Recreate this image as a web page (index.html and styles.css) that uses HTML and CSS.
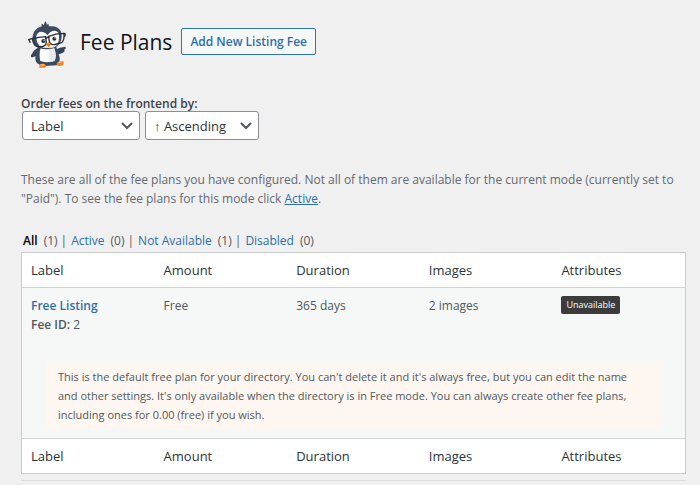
FILE: index.html
```html
<!DOCTYPE html>
<html lang="en">
<head>
<meta charset="utf-8">
<title>Fee Plans</title>
<meta name="viewport" content="width=device-width, initial-scale=1">
<link rel="stylesheet" href="styles.css">
</head>
<body>
<main class="page">
  <header class="page-header">
    <svg class="logo" viewBox="24 30 117 141" aria-hidden="true">
      <path d="M51 112 Q39 119 33 133 Q31 140 37 139 Q47 137 55 130Z" fill="#35445a"/>
      <path d="M106 116 Q119 108 136 107 Q140 112 132 117 Q137 119 131 124 Q122 131 108 130Z" fill="#35445a"/>
      <path d="M53 107 Q42 135 48 152 Q56 164 76 165 L110 163 Q123 156 118 136 L108 105Z" fill="#3b4a60"/>
      <path d="M62 110 Q56 129 61 150 Q77 157 104 150 Q111 131 102 110Z" fill="#fff"/>
      <path d="M87 111 L102 110 Q111 131 104 150 L88 154Z" fill="#e3e9ed"/>
      <path d="M66 46 Q63 41 65 38 L72 42 Q72 34 78 31 Q79 37 81 41 L86 38 Q84 44 89 46 Q112 43 122 60 Q129 77 120 96 Q108 114 84 115 Q53 116 42 99 Q33 82 42 63 Q51 49 66 46Z" fill="#3b4a60"/>
      <path d="M49 76 Q53 59 69 63 Q78 65 83 73 Q90 58 106 59 Q120 63 117 81 Q116 101 103 108 Q84 115 62 107 Q49 99 49 76Z" fill="#fff"/>
      <path d="M84 112 Q107 109 117 83 Q115 100 103 108 Q94 112 84 112Z" fill="#dce3e9"/>
      <path d="M55 93 Q59 105 72 108 L84 108 L82 111 Q68 111 60 105Z" fill="#d4dce3"/>
      <circle cx="70" cy="90" r="6" fill="#202a36"/>
      <circle cx="103" cy="83" r="6" fill="#202a36"/>
      <circle cx="72" cy="88" r="2" fill="#fff"/>
      <circle cx="105" cy="81" r="2" fill="#fff"/>
      <g fill="none" stroke="#242b34" stroke-width="4" stroke-linejoin="round" stroke-linecap="round">
        <path d="M37 83 Q57 78 77 77 L79 96 Q76 106 64 107 L51 106 Q41 104 37 83Z"/>
        <path d="M86 76 Q107 67 132 67 Q134 87 125 95 L103 101 Q91 101 88 92Z"/>
        <path d="M26 86 L38 82 M27 86 L30 94 M77 81 L87 78 M132 67 L136 69 L134 76"/>
      </g>
      <path d="M77 99 L85 94 L93 99 L86 109Z" fill="#ff982a"/>
      <path d="M77 99 L93 99 L86 109Z" fill="#ef7716"/>
      <path d="M58 163 Q64 155 75 160 Q82 169 73 170 L58 170Z" fill="#f77f20"/>
      <path d="M58 163 Q64 155 74 160 L70 165Z" fill="#ffb85b"/>
      <path d="M109 158 Q119 148 130 151 Q134 159 125 164 Q111 168 109 158Z" fill="#f77f20"/>
      <path d="M111 156 Q119 148 129 151 L121 156Z" fill="#ffb85b"/>
    </svg>
    <h1>Fee Plans</h1>
    <a class="add-button" href="#">Add New Listing Fee</a>
  </header>

  <form class="order-form">
    <label for="order-by">Order fees on the frontend by:</label>
    <div class="select-row">
      <span class="select-box select-by">
        <select id="order-by"><option>Label</option><option>Amount</option><option>Duration</option></select>
        <svg class="chevron" viewBox="0 0 14 10" aria-hidden="true"><path d="M2 2 L7 7 L12 2"/></svg>
      </span>
      <span class="select-box select-direction">
        <select aria-label="Direction"><option>↑ Ascending</option><option>↓ Descending</option></select>
        <svg class="chevron" viewBox="0 0 14 10" aria-hidden="true"><path d="M2 2 L7 7 L12 2"/></svg>
      </span>
    </div>
  </form>

  <p class="intro">These are all of the fee plans you have configured. Not all of them are available for the current mode (currently set to "Paid"). To see the fee plans for this mode click <a href="#">Active</a>.</p>

  <ul class="views">
    <li><a class="current" href="#">All</a><span>(1)</span></li>
    <li><a href="#">Active</a><span>(0)</span></li>
    <li><a href="#">Not Available</a><span>(1)</span></li>
    <li><a href="#">Disabled</a><span>(0)</span></li>
  </ul>

  <table class="plans">
    <thead>
      <tr><th scope="col">Label</th><th scope="col">Amount</th><th scope="col">Duration</th><th scope="col">Images</th><th scope="col">Attributes</th></tr>
    </thead>
    <tbody>
      <tr class="plan">
        <td><a class="plan-name" href="#">Free Listing</a><div><b>Fee ID:</b> 2</div></td>
        <td>Free</td>
        <td>365 days</td>
        <td>2 images</td>
        <td><span class="tag">Unavailable</span></td>
      </tr>
      <tr>
        <td class="note-cell" colspan="5"><p class="note">This is the default free plan for your directory. You can't delete it and it's always free, but you can edit the name and other settings. It's only available when the directory is in Free mode. You can always create other fee plans, including ones for 0.00 (free) if you wish.</p></td>
      </tr>
    </tbody>
    <tfoot>
      <tr><th scope="col">Label</th><th scope="col">Amount</th><th scope="col">Duration</th><th scope="col">Images</th><th scope="col">Attributes</th></tr>
    </tfoot>
  </table>
  <hr class="divider">
</main>
</body>
</html>
```
FILE: styles.css
```css
* {
  box-sizing: border-box;
}

body {
  margin: 0;
  background: #f0f0f0;
  color: #50575e;
  font: 12px/19px "Open Sans", "Noto Sans", sans-serif;
}

a {
  color: #2c6fad;
}

.page {
  padding: 20px 14px 0 21px;
}

.page-header {
  display: flex;
  align-items: center;
  padding-left: 7px;
  height: 48px;
}

.logo {
  width: 39px;
  height: 47px;
  margin-right: 13px;
}

h1 {
  margin: 0 9px 4px 0;
  color: #111418;
  font-size: 21px;
  font-weight: 400;
  line-height: 28px;
}

.add-button {
  margin-bottom: 6px;
  padding: 0 8px;
  border: 1px solid #2f75b1;
  border-radius: 2px;
  background: #f6f7f7;
  font-weight: 600;
  line-height: 25px;
  text-decoration: none;
}

.order-form {
  margin-top: 26px;
}

.order-form label {
  display: block;
  height: 17px;
  color: #3c434a;
  font-weight: 600;
}

.select-row {
  display: flex;
  gap: 5px;
  padding-left: 1px;
}

.select-box {
  display: grid;
  align-items: center;
}

.select-box > * {
  grid-area: 1 / 1;
}

.select-by {
  width: 118px;
}

.select-direction {
  width: 114px;
}

select {
  width: 100%;
  height: 29px;
  padding: 0 24px 0 8px;
  appearance: none;
  border: 1px solid #8c8f94;
  border-radius: 3px;
  background: #fff;
  color: #2c3338;
  font: 13px/24px "Open Sans", "Noto Sans", sans-serif;
}

.chevron {
  justify-self: end;
  width: 14px;
  height: 10px;
  margin-right: 6px;
  fill: none;
  stroke: #50575e;
  stroke-width: 2;
  pointer-events: none;
}

.intro {
  margin: 30px 0 23px;
  color: #646970;
}

.views {
  display: flex;
  margin: 0;
  padding: 0 2px 2px;
  list-style: none;
}

.views a {
  margin-right: 6px;
  text-decoration: none;
}

.views .current {
  color: #000;
  font-weight: 600;
}

.views li:not(:last-child)::after {
  content: "|";
  margin: 0 4px 0 3px;
}

.plans {
  width: 100%;
  table-layout: fixed;
  border: 1px solid #c9cccf;
  border-collapse: separate;
  border-spacing: 0;
  background: #fff;
}

.plans th {
  padding: 8px 9px;
  color: #2c3338;
  font-size: 13px;
  font-weight: 400;
  line-height: 18px;
  text-align: left;
}

.plans thead th {
  border-bottom: 1px solid #d0d3d6;
}

.plans tfoot th {
  border-top: 1px solid #d0d3d6;
}

.plans tbody {
  background: #f6f7f7;
}

.plans td {
  padding: 8px 9px;
  vertical-align: top;
}

.plan-name {
  font-weight: 600;
  text-decoration: none;
}

.plans b {
  font-weight: 600;
}

.tag {
  display: inline-block;
  padding: 0 5px;
  border-radius: 2px;
  background: #3c3c3c;
  color: #fff;
  font-size: 9px;
  line-height: 18px;
  vertical-align: top;
}

.plans .note-cell {
  padding: 19px 24px 8px;
}

.note {
  margin: 0;
  padding: 6px 12px;
  background: #fef7f1;
  font-size: 11px;
}

.divider {
  margin: 6px 0 0;
  border: 0;
  border-top: 1px solid #dcdcde;
}
```
